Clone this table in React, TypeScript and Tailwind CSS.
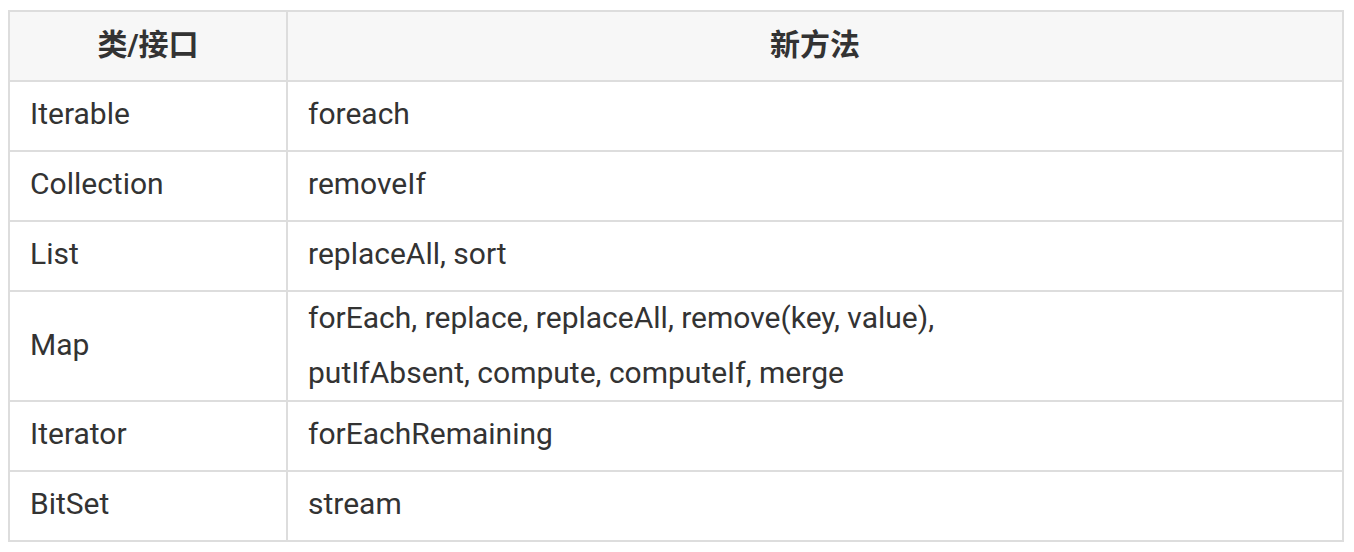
import React from "react";

const rows: { name: string; methods: string[] }[] = [
  { name: "Iterable", methods: ["foreach"] },
  { name: "Collection", methods: ["removeIf"] },
  { name: "List", methods: ["replaceAll, sort"] },
  {
    name: "Map",
    methods: [
      "forEach, replace, replaceAll, remove(key, value),",
      "putIfAbsent, compute, computeIf, merge",
    ],
  },
  { name: "Iterator", methods: ["forEachRemaining"] },
  { name: "BitSet", methods: ["stream"] },
];

export default function App() {
  return (
    <div
      className="min-h-[552px] w-[1354px] bg-white pl-[8px] pt-[10px] text-[#333] text-[30px]"
      style={{ fontFamily: 'Roboto, "Noto Sans CJK SC", sans-serif' }}
    >
      <div className="w-[1336px] border-l-2 border-t-2 border-[#dddddd]">
        <div className="flex h-[70px] bg-[#f7f7f7] font-bold">
          <div className="flex w-[278px] items-center justify-center border-b-2 border-r-2 border-[#dddddd] pb-[4px]">
            类/接口
          </div>
          <div className="flex flex-1 items-center justify-center border-b-2 border-r-2 border-[#dddddd] pb-[4px]">
            新方法
          </div>
        </div>
        {rows.map((r) => {
          const multi = r.methods.length > 1;
          return (
            <div
              key={r.name}
              className={multi ? "flex h-[110px]" : "flex h-[70px]"}
            >
              <div
                className={
                  "flex w-[278px] items-center border-b-2 border-r-2 border-[#dddddd] px-[20px] " +
                  (multi ? "pb-[4px]" : "pb-[6px]")
                }
              >
                {r.name}
              </div>
              <div
                className={
                  "flex flex-1 flex-col justify-center overflow-visible border-b-2 border-r-2 border-[#dddddd] px-[20px] leading-[55px] " +
                  (multi ? "pb-[3px]" : "pb-[6px]")
                }
              >
                {r.methods.map((m) => (
                  <div key={m} className="whitespace-nowrap">
                    {m}
                  </div>
                ))}
              </div>
            </div>
          );
        })}
      </div>
    </div>
  );
}
